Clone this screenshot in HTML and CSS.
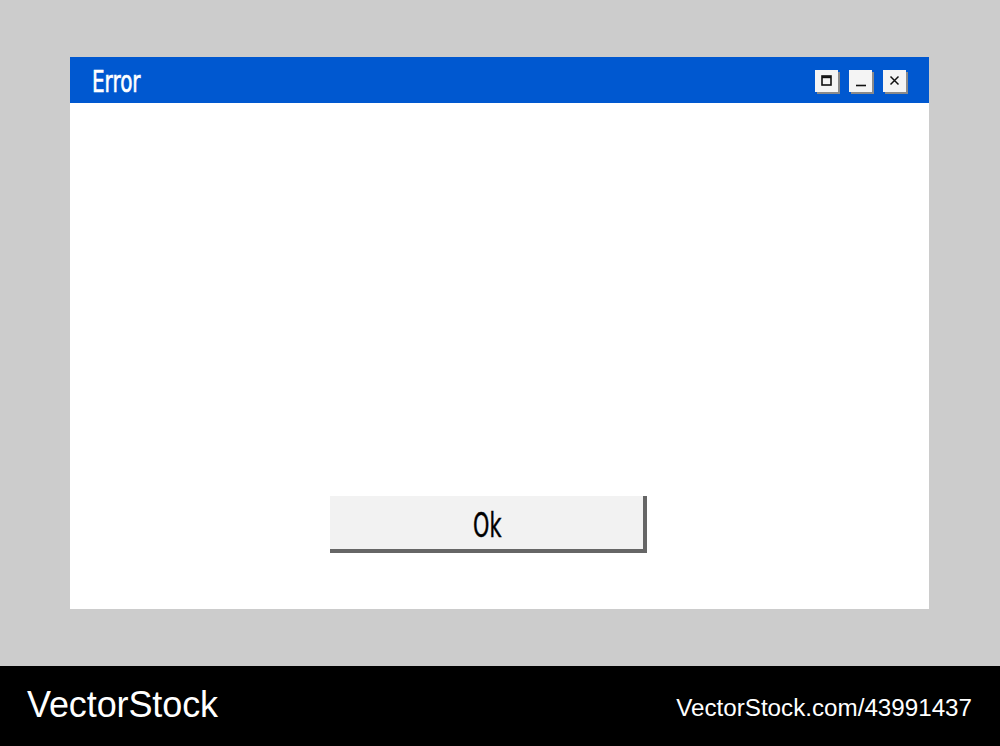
FILE: index.html
```html
<!DOCTYPE html>
<html>
<head>
<meta charset="utf-8">
<link rel="stylesheet" href="styles.css">
</head>
<body>
<div class="stage">
  <div class="window">
    <div class="titlebar">
      <span class="title">Error</span>
      <div class="controls">
        <span class="ctl"><svg width="11" height="11" viewBox="0 0 11 11"><rect x="1" y="1" width="9" height="9" fill="none" stroke="#111" stroke-width="1.6"/><line x1="1" y1="2.2" x2="10" y2="2.2" stroke="#111" stroke-width="2"/></svg></span>
        <span class="ctl"><svg width="12" height="12" viewBox="0 0 12 12"><line x1="1" y1="10.5" x2="11" y2="10.5" stroke="#111" stroke-width="1.6"/></svg></span>
        <span class="ctl"><svg width="11" height="11" viewBox="0 0 11 11"><path d="M1.5 1.5 L9.5 9.5 M9.5 1.5 L1.5 9.5" stroke="#111" stroke-width="1.5"/></svg></span>
      </div>
    </div>
    <div class="body">
      <button class="ok"><span class="ok-label">Ok</span></button>
    </div>
  </div>
</div>
<div class="footer">
  <span class="brand">VectorStock</span>
  <span class="url">VectorStock.com/43991437</span>
</div>
</body>
</html>
```
FILE: styles.css
```css
html, body { margin: 0; padding: 0; }
body { background: #cccccc; width: 1000px; height: 746px; overflow: hidden; font-family: "DejaVu Sans", sans-serif; }
.stage { height: 666px; padding: 57px 0 0 70px; box-sizing: border-box; }
.window { width: 859px; height: 552px; background: #ffffff; display: flex; flex-direction: column; }
.titlebar { height: 46px; background: #0058d0; display: flex; align-items: center; justify-content: space-between; padding: 0 23px 0 22px; box-sizing: border-box; }
.title { color: #fff; font-family: "DejaVu Sans", sans-serif; font-stretch: condensed; font-size: 30px; display: inline-block; transform: scaleX(0.74); transform-origin: left center; margin-top: 2px; -webkit-text-stroke: 0.6px #fff; }
.controls { display: flex; gap: 11px; margin-top: 1px; }
.ctl { width: 23px; height: 22px; background: #f4f4f4; box-shadow: 2px 2px 0 #8a8a8a; display: flex; align-items: center; justify-content: center; }
.body { flex: 1; display: flex; align-items: flex-start; padding: 393px 0 0 260px; }
.ok { box-sizing: border-box; width: 317px; height: 57px; background: #f2f2f2; border: 0; border-right: 4px solid #666; border-bottom: 4px solid #666; padding: 0; color: #000; display: flex; align-items: center; justify-content: center; }
.ok-label { display: inline-block; font-family: "DejaVu Sans", sans-serif; font-stretch: condensed; font-size: 33px; transform: scaleX(0.7); margin-top: 5px; margin-left: 2px; -webkit-text-stroke: 0.4px #000; }
.footer { height: 80px; background: #000; display: flex; align-items: center; justify-content: space-between; padding: 0 28px 0 27px; color: #fff; font-family: "Liberation Sans", Arial, sans-serif; }
.brand { font-size: 36px; letter-spacing: -0.1px; margin-top: -2px; }
.url { font-size: 24.2px; letter-spacing: 0; margin-top: 3px; }
```
